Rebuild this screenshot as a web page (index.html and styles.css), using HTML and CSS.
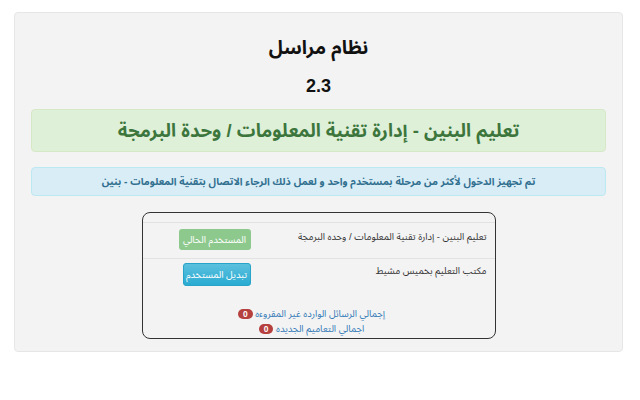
FILE: index.html
```html
<!DOCTYPE html>
<html lang="ar" dir="rtl">
<head>
<meta charset="utf-8">
<title>نظام مراسل</title>
<link rel="stylesheet" href="styles.css">
</head>
<body>
<div class="jumbo">
  <h3 class="title">نظام مراسل</h3>
  <h4 class="version">2.3</h4>
  <div class="alert alert-success">تعليم البنين - إدارة تقنية المعلومات / وحدة البرمجة</div>
  <div class="alert alert-info">تم تجهيز الدخول لأكثر من مرحلة بمستخدم واحد و لعمل ذلك الرجاء الاتصال بتقنية المعلومات - بنين</div>
  <div class="userbox">
    <table class="users">
      <tr>
        <td class="name">تعليم البنين - إدارة تقنية المعلومات / وحده البرمجة</td>
        <td class="act"><span class="btn btn-success disabled">المستخدم الحالي</span></td>
      </tr>
      <tr>
        <td class="name">مكتب التعليم بخميس مشيط</td>
        <td class="act"><span class="btn btn-info">تبديل المستخدم</span></td>
      </tr>
    </table>
    <div class="links">
      <a href="#" class="lnk">إجمالي الرسائل الوارده غير المقروءه <span class="badge">0</span></a>
      <a href="#" class="lnk">اجمالي التعاميم الجديده <span class="badge">0</span></a>
    </div>
  </div>
</div>
</body>
</html>
```
FILE: styles.css
```css
html, body {
  margin: 0;
  padding: 0;
  background: #fff;
}
body {
  font-family: "Liberation Sans", "Noto Sans Arabic", "DejaVu Sans Condensed", "DejaVu Sans", Arial, sans-serif;
  color: #333;
  direction: rtl;
}
.jumbo {
  margin: 12px 17px 0 14px;
  height: 340px;
  box-sizing: border-box;
  background: #f3f3f3;
  border: 1px solid #e6e6e6;
  border-radius: 4px;
  padding: 20px 16px 0 16px;
}
.title {
  margin: 0;
  text-align: center;
  font-size: 19px;
  font-weight: bold;
  color: #111;
  line-height: 30px;
}
.version {
  margin: 12px 0 0 0;
  text-align: center;
  font-size: 18px;
  font-weight: bold;
  color: #111;
  line-height: 22px;
}
.alert {
  border-radius: 4px;
  text-align: center;
  font-weight: bold;
  white-space: nowrap;
}
.alert-success {
  margin-top: 12px;
  height: 43px;
  line-height: 42px;
  background: #dff0d8;
  border: 1px solid #d6e9c6;
  box-sizing: border-box;
  color: #3c763d;
  font-size: 18.5px;
}
.alert-info {
  margin-top: 15px;
  height: 29px;
  line-height: 27px;
  background: #d9edf7;
  border: 1px solid #bce8f1;
  box-sizing: border-box;
  color: #31708f;
  font-size: 10.2px;
}
.userbox {
  width: 354px;
  margin: 16px auto 0 auto;
  box-sizing: border-box;
  border: 1px solid #333;
  border-radius: 8px;
  padding: 9px 0 2px 0;
}
.users {
  width: 100%;
  border-collapse: collapse;
  font-size: 9.5px;
  line-height: 16px;
}
.users td {
  border-top: 1px solid #e2e2e2;
  vertical-align: top;
  padding: 6px 8px 8px 8px;
  white-space: nowrap;
}
.users tr + tr td {
  padding-top: 4px;
  padding-bottom: 6px;
}
.users td.name {
  text-align: right;
}
.users td.act {
  width: 100px;
}
.btn {
  display: block;
  font-size: 9.5px;
  color: #fff;
  border-radius: 3px;
  height: 21px;
  line-height: 21px;
  box-sizing: border-box;
  white-space: nowrap;
  text-align: center;
}
.btn-success.disabled {
  background: #8dc98d;
  width: 72px;
}
.btn-info {
  background: linear-gradient(#5bc0de, #2aabd2);
  border: 1px solid #28a4c9;
  height: 23px;
  line-height: 21px;
  width: 68px;
}
.links {
  margin-top: 14px;
  margin-right: 14px;
  text-align: center;
  font-size: 9.5px;
  line-height: 15px;
}
.lnk {
  display: block;
  color: #337ab7;
  text-decoration: none;
}
.badge {
  display: inline-block;
  background: #b5403e;
  color: #fff;
  font-weight: bold;
  font-size: 8.5px;
  line-height: 10px;
  padding: 0 5px;
  border-radius: 5px;
  vertical-align: middle;
  font-family: "Liberation Sans", sans-serif;
}
```
